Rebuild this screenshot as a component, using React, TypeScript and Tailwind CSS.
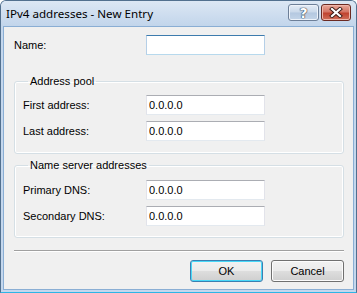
import React from 'react';

const font = { fontFamily: '"Liberation Sans", Arial, sans-serif' };

function Field({ label, value, focused, labelWidth }: { label: string; value: string; focused?: boolean; labelWidth: string }) {
  return (
    <div className="flex items-center h-[20px]">
      <label className={`${labelWidth} shrink-0 text-[11px] text-black`}>{label}</label>
      <input
        readOnly
        value={value}
        className={
          'w-[119px] h-[20px] px-[2px] text-[11px] text-black bg-white outline-none border ' +
          (focused
            ? 'border-[#b5cfe7] border-t-[#3d7bad] border-b-[#b7d9ed]'
            : 'border-[#e2e3ea] border-t-[#abadb3] border-b-[#e3e9ef]')
        }
      />
    </div>
  );
}

function Group({ title, pad, children }: { title: string; pad: string; children: React.ReactNode }) {
  return (
    <fieldset className={`border border-[#d5dfe5] rounded-[3px] shadow-[inset_0_0_0_1px_#ffffff] pl-[8px] ${pad} flex flex-col gap-[6px]`}>
      <legend className="ml-[5px] px-[2px] text-[11px] leading-[13px] text-black">{title}</legend>
      {children}
    </fieldset>
  );
}

function Button({ children, isDefault }: { children: React.ReactNode; isDefault?: boolean }) {
  return (
    <button
      className={
        'w-[73px] h-[22px] rounded-[3px] border text-[11px] text-black bg-[linear-gradient(#f2f2f2_0%,#ebebeb_48%,#dddddd_52%,#cfcfcf_100%)] ' +
        (isDefault
          ? 'border-[#3c7fb1] shadow-[inset_0_0_0_1px_#48d8f8]'
          : 'border-[#707070] shadow-[inset_0_0_0_1px_#fcfcfc]')
      }
    >
      {children}
    </button>
  );
}

export default function App() {
  return (
    <div className="w-[357px] h-[293px] bg-white" style={font}>
      <div className="w-full h-full flex flex-col rounded-t-[6px] border border-[#52708f] border-b-[#2db5e6] bg-[#c4d7ed] overflow-hidden">
        {/* title bar */}
        <div className="h-[25px] shrink-0 flex items-start bg-[linear-gradient(#dce7f4,#c2d5eb)]">
          <span
            className="mt-[5px] ml-[5px] text-[11.6px] leading-[16px] text-black"
            style={{ fontFamily: '"Noto Sans", "Open Sans", sans-serif' }}
          >
            IPv4 addresses - New Entry
          </span>
          <div className="ml-auto mr-[5px] mt-[3px] flex gap-[2px]">
            <div className="w-[31px] h-[17px] rounded-[3px] border border-[#6d7f98] bg-[linear-gradient(#e4ecf6_0%,#c9d8ea_48%,#b4c8e0_52%,#c3d4e8_100%)] shadow-[inset_0_0_0_1px_#eef3fa] flex items-center justify-center">
              <span
                className="text-[14px] leading-[14px] font-bold text-white"
                style={{ fontFamily: '"DejaVu Sans", sans-serif', textShadow: '0 0 1px #2a3a4e, 0 0 1px #2a3a4e, 0 0 1px #2a3a4e' }}
              >
                ?
              </span>
            </div>
            <div className="w-[30px] h-[17px] rounded-[3px] border border-[#6b2a22] bg-[linear-gradient(#e8a799_0%,#d47565_45%,#c0432f_55%,#d0705b_100%)] shadow-[inset_0_0_0_1px_#efb6aa] flex items-center justify-center">
              <svg width="14" height="11" viewBox="0 0 14 11">
                <path d="M3 2 L11 9 M11 2 L3 9" stroke="#3a1a16" strokeWidth="4" strokeLinecap="square" />
                <path d="M3 2 L11 9 M11 2 L3 9" stroke="#ffffff" strokeWidth="2.2" strokeLinecap="square" />
              </svg>
            </div>
          </div>
        </div>

        {/* client area */}
        <div className="flex-1 mx-[2px] mb-[2px] border border-[#8aaed4] bg-[#f0f0f0] pl-[10px] pr-[9px] pt-[8px] flex flex-col">
          <Field label="Name:" value="" focused labelWidth="w-[132px]" />

          <div className="mt-[20px]">
            <Group title="Address pool" pad="pt-[7px] pb-[12px]">
              <Field label="First address:" value="0.0.0.0" labelWidth="w-[123px]" />
              <Field label="Last address:" value="0.0.0.0" labelWidth="w-[123px]" />
            </Group>
          </div>

          <div className="mt-[5px]">
            <Group title="Name server addresses" pad="pt-[8px] pb-[11px]">
              <Field label="Primary DNS:" value="0.0.0.0" labelWidth="w-[123px]" />
              <Field label="Secondary DNS:" value="0.0.0.0" labelWidth="w-[123px]" />
            </Group>
          </div>

          <div className="mt-[12px] h-[2px] border-t border-[#a0a0a0] border-b border-b-white" />

          <div className="mt-[8px] flex justify-end gap-[8px]">
            <Button isDefault>OK</Button>
            <Button>Cancel</Button>
          </div>
        </div>
      </div>
    </div>
  );
}
